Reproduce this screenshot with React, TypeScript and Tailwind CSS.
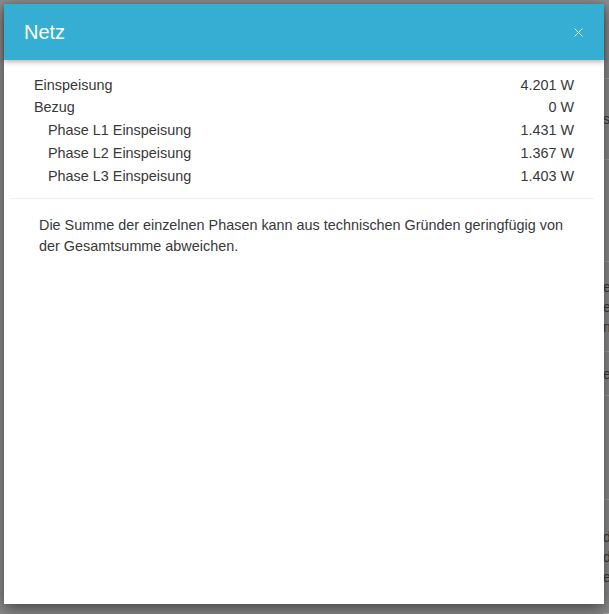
import { X } from "lucide-react";

const rows = [
  { label: "Einspeisung", value: "4.201 W", sub: false },
  { label: "Bezug", value: "0 W", sub: false },
  { label: "Phase L1 Einspeisung", value: "1.431 W", sub: true },
  { label: "Phase L2 Einspeisung", value: "1.367 W", sub: true },
  { label: "Phase L3 Einspeisung", value: "1.403 W", sub: true },
];

// slices of the dimmed page that peek out to the right of the dialog
const strip = [
  { h: "h-[79px]", text: "" },
  { h: "h-[81px]", text: "s" },
  { h: "h-[102px]", text: "" },
  { h: "h-[90px]", text: "een" },
  { h: "h-[44px]", text: "e" },
  { h: "h-[104px]", text: "" },
  { h: "h-[114px]", text: "dde" },
];

function Backdrop() {
  return (
    <div className="absolute inset-0 bg-[#8b8b8b] flex justify-end text-[14px] text-[#3a3a3a]">
      <div className="w-[6px] flex flex-col">
        {strip.map((s, i) => (
          <div
            key={i}
            className={`${s.h} border-b border-[#a3a3a3] flex flex-col justify-center leading-[20px] whitespace-pre overflow-hidden`}
          >
            {s.text.split("").join("\n")}
          </div>
        ))}
      </div>
    </div>
  );
}

export default function App() {
  return (
    <div
      className="relative w-[609px] h-[614px] overflow-hidden"
      style={{ fontFamily: '"Liberation Sans", Arial, sans-serif' }}
    >
      <Backdrop />
      <div className="relative p-[4px]">
        <div className="w-[600px] h-[600px] bg-white flex flex-col shadow-[0_5px_15px_rgba(0,0,0,0.5)]">
          <div className="relative z-10 h-[56px] shrink-0 bg-[#36add2] pl-[20px] pr-[18px] flex items-center justify-between shadow-[0_2px_5px_rgba(0,0,0,0.3)]">
            <h2 className="text-[20px] text-white leading-none">Netz</h2>
            <X className="w-[15px] h-[15px] text-white" strokeWidth={1.4} />
          </div>
          <div className="pt-[14px] px-[6px]">
            <div className="px-[24px] pb-[10px] text-[14.4px] text-[#383838]">
              {rows.map((r) => (
                <div
                  key={r.label}
                  className="h-[22.75px] flex items-center justify-between"
                >
                  <span className={r.sub ? "pl-[14px]" : ""}>{r.label}</span>
                  <span>{r.value}</span>
                </div>
              ))}
            </div>
            <div className="mr-[4px] h-px bg-[#f0f0f0]" />
          </div>
          <p className="px-[35px] pt-[16px] text-[14.4px] leading-[21px] text-[#383838]">
            Die Summe der einzelnen Phasen kann aus technischen Gründen
            geringfügig von der Gesamtsumme abweichen.
          </p>
        </div>
      </div>
    </div>
  );
}
